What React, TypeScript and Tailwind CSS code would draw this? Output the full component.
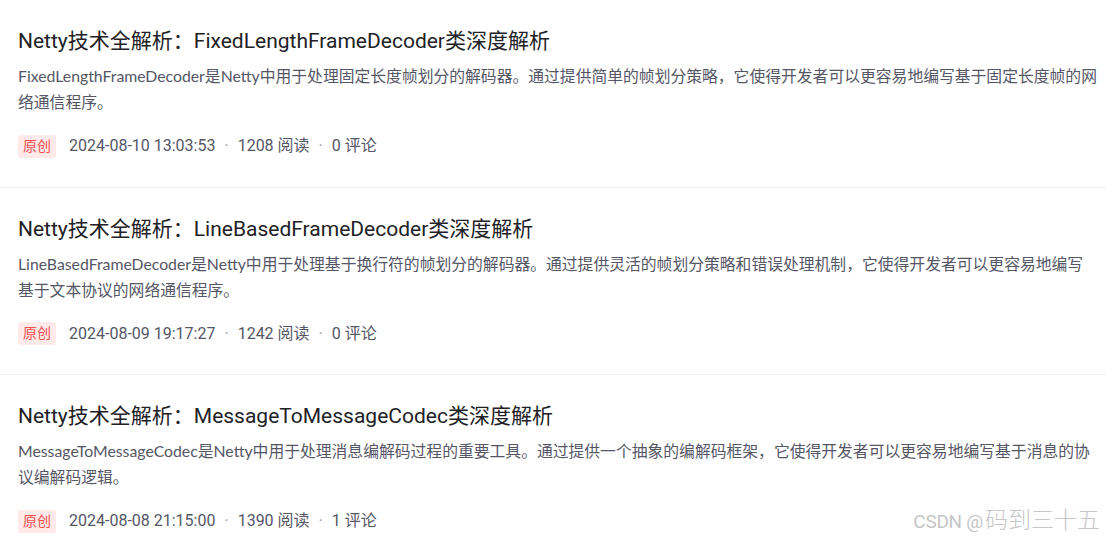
import React from "react";

type Item = {
  title: string;
  desc: string[];
  date: string;
  reads: number;
  comments: number;
};

const items: Item[] = [
  {
    title: "Netty技术全解析：FixedLengthFrameDecoder类深度解析",
    desc: [
      "FixedLengthFrameDecoder是Netty中用于处理固定长度帧划分的解码器。通过提供简单的帧划分策略，它使得开发者可以更容易地编写基于固定长度帧的网",
      "络通信程序。",
    ],
    date: "2024-08-10 13:03:53",
    reads: 1208,
    comments: 0,
  },
  {
    title: "Netty技术全解析：LineBasedFrameDecoder类深度解析",
    desc: [
      "LineBasedFrameDecoder是Netty中用于处理基于换行符的帧划分的解码器。通过提供灵活的帧划分策略和错误处理机制，它使得开发者可以更容易地编写",
      "基于文本协议的网络通信程序。",
    ],
    date: "2024-08-09 19:17:27",
    reads: 1242,
    comments: 0,
  },
  {
    title: "Netty技术全解析：MessageToMessageCodec类深度解析",
    desc: [
      "MessageToMessageCodec是Netty中用于处理消息编解码过程的重要工具。通过提供一个抽象的编解码框架，它使得开发者可以更容易地编写基于消息的协",
      "议编解码逻辑。",
    ],
    date: "2024-08-08 21:15:00",
    reads: 1390,
    comments: 1,
  },
];

export default function App() {
  return (
    <div className="w-[1106px] h-[544px] overflow-hidden bg-white relative font-['Roboto','Noto_Sans_CJK_SC',sans-serif]">
      {items.map((it, i) => (
        <div
          key={i}
          className={`pl-[18px] pt-[27px] pb-[28.5px] ${i < items.length - 1 ? "border-b border-[#f0f0f2]" : ""}`}
        >
          <div className="text-[21px] leading-[28px] text-[#222226]">{it.title}</div>
          <div className="mt-[8px] text-[15.8px] leading-[26px] text-[#555666] font-['Lato','Noto_Sans_CJK_SC',sans-serif]">
            {it.desc.map((line, j) => (
              <div key={j} className="whitespace-nowrap">
                {line}
              </div>
            ))}
          </div>
          <div className="mt-[19px] flex items-center h-[24px] text-[16px] leading-[24px] text-[#555666]">
            <span className="h-[23px] px-[5px] rounded-[3px] bg-[#ffe9e9] text-[#f0504d] text-[14px] leading-[23px]">原创</span>
            <span className="ml-[13px]">{it.date}</span>
            <span className="mx-[9px] text-[#999aaa]">·</span>
            <span>{it.reads} 阅读</span>
            <span className="mx-[9px] text-[#999aaa]">·</span>
            <span>{it.comments} 评论</span>
          </div>
        </div>
      ))}
      <div className="absolute right-[6px] bottom-[8px] flex items-baseline text-[#c6c6c6]">
        <span className="text-[19px] tracking-[-0.3px] mr-[2px]">CSDN @</span>
        <span className="text-[23px] font-['Noto_Sans_CJK_SC',sans-serif] font-light">码到三十五</span>
      </div>
    </div>
  );
}
